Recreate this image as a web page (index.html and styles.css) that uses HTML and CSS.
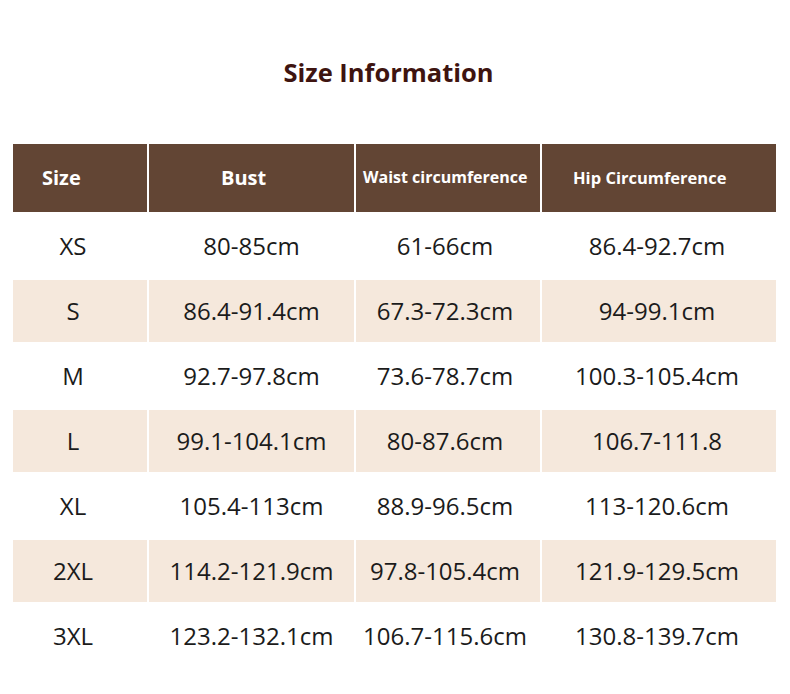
FILE: index.html
```html
<!DOCTYPE html>
<html lang="en">
<head>
<meta charset="utf-8">
<title>Size Information</title>
<link rel="stylesheet" href="styles.css">
</head>
<body>
<main class="page">
  <h1 class="title">Size Information</h1>
  <div class="chart">
    <div class="row head">
      <div class="cell h-size">Size</div>
      <div class="cell h-bust">Bust</div>
      <div class="cell h-waist">Waist circumference</div>
      <div class="cell h-hip">Hip Circumference</div>
    </div>
    <div class="row">
      <div class="cell size">XS</div><div class="cell">80-85cm</div><div class="cell waist">61-66cm</div><div class="cell hip">86.4-92.7cm</div>
    </div>
    <div class="row shade">
      <div class="cell size">S</div><div class="cell">86.4-91.4cm</div><div class="cell waist">67.3-72.3cm</div><div class="cell hip">94-99.1cm</div>
    </div>
    <div class="row">
      <div class="cell size">M</div><div class="cell">92.7-97.8cm</div><div class="cell waist">73.6-78.7cm</div><div class="cell hip">100.3-105.4cm</div>
    </div>
    <div class="row shade">
      <div class="cell size">L</div><div class="cell">99.1-104.1cm</div><div class="cell waist">80-87.6cm</div><div class="cell hip">106.7-111.8</div>
    </div>
    <div class="row">
      <div class="cell size">XL</div><div class="cell">105.4-113cm</div><div class="cell waist">88.9-96.5cm</div><div class="cell hip">113-120.6cm</div>
    </div>
    <div class="row shade">
      <div class="cell size">2XL</div><div class="cell">114.2-121.9cm</div><div class="cell waist">97.8-105.4cm</div><div class="cell hip">121.9-129.5cm</div>
    </div>
    <div class="row">
      <div class="cell size">3XL</div><div class="cell">123.2-132.1cm</div><div class="cell waist">106.7-115.6cm</div><div class="cell hip">130.8-139.7cm</div>
    </div>
  </div>
</main>
</body>
</html>
```
FILE: styles.css
```css
html, body {
  margin: 0;
  padding: 0;
  background: #ffffff;
}
body {
  font-family: "Open Sans", "Noto Sans", "DejaVu Sans", sans-serif;
  color: #1b1b1b;
}
.page {
  width: 790px;
  height: 694px;
  overflow: hidden;
}
.title {
  margin: 55px 0 0;
  padding-right: 13px;
  text-align: center;
  font-size: 25.5px;
  line-height: 35px;
  font-weight: 700;
  color: #3e1410;
  letter-spacing: 0;
}
.chart {
  margin: 54px 0 0 13px;
  display: flex;
  flex-direction: column;
  gap: 3px;
}
.row {
  display: grid;
  grid-template-columns: 134px 205px 184px 234px;
  column-gap: 2px;
  height: 62px;
}
.cell {
  display: flex;
  align-items: center;
  justify-content: center;
  font-size: 24px;
  white-space: nowrap;
  padding-bottom: 1px;
}
.shade .cell {
  background: #f5e8dc;
}
.size {
  padding-right: 14px;
}
.waist {
  padding-right: 6px;
}
.hip {
  padding-right: 4px;
}
.head {
  height: 68px;
}
.head .cell {
  background: #624534;
  color: #ffffff;
  font-weight: 700;
  justify-content: flex-start;
  padding-bottom: 2px;
}
.h-size {
  font-size: 20px;
  padding-left: 29px;
}
.h-bust {
  font-size: 20px;
  padding-left: 72px;
}
.h-waist {
  font-size: 16px;
  padding-left: 7px;
}
.h-hip {
  font-size: 16.5px;
  padding-left: 31px;
}
```
